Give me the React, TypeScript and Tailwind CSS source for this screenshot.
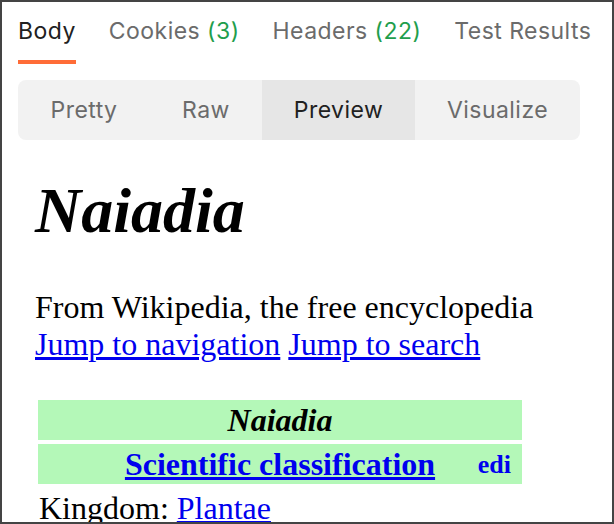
import React from 'react';

const tabs = [
  { label: 'Body', count: null, active: true },
  { label: 'Cookies', count: '(3)', active: false },
  { label: 'Headers', count: '(22)', active: false },
  { label: 'Test Results', count: null, active: false },
];

const modes = [
  { label: 'Pretty', width: 'w-[132px]', active: false },
  { label: 'Raw', width: 'w-[112px]', active: false },
  { label: 'Preview', width: 'w-[153px]', active: true },
  { label: 'Visualize', width: 'w-[165px]', active: false },
];

const App: React.FC = () => {
  return (
    <div className="w-[614px] h-[524px] overflow-hidden bg-white border-2 border-[#444444]">
      {/* Response tabs */}
      <div className="pl-[16px] pt-[13px] flex gap-[33px] font-['Inter',sans-serif] text-[23px] tracking-[0.02em]">
        {tabs.map((tab) => (
          <div key={tab.label} className="flex flex-col">
            <div className={`h-[32px] leading-[32px] whitespace-nowrap ${tab.active ? 'text-[#212121]' : 'text-[#6b6b6b]'}`}>
              {tab.label}
              {tab.count && <span className="text-[#1f9e4d]"> {tab.count}</span>}
            </div>
            <div className={`mt-[13px] h-[4px] ${tab.active ? 'bg-[#ff6c37]' : 'bg-transparent'}`} />
          </div>
        ))}
      </div>

      {/* Body view modes */}
      <div className="ml-[16px] mt-[16px] w-[562px] h-[60px] flex rounded-[8px] overflow-hidden bg-[#f2f2f2] font-['Inter',sans-serif] text-[23px] tracking-[0.02em]">
        {modes.map((mode) => (
          <div
            key={mode.label}
            className={`${mode.width} flex items-center justify-center ${mode.active ? 'bg-[#e6e6e6] text-[#212121]' : 'text-[#6b6b6b]'}`}
          >
            {mode.label}
          </div>
        ))}
      </div>

      {/* HTML preview */}
      <div className="pl-[33px] font-['Liberation_Serif','Times_New_Roman',serif] text-black">
        <h1 className="mt-[34px] text-[64px] leading-[74px] font-bold italic">Naiadia</h1>
        <div className="mt-[41px] text-[32px] leading-[37px]">
          <div>From Wikipedia, the free encyclopedia</div>
          <div>
            <span className="text-[#0000ee] underline">Jump to navigation</span>{' '}
            <span className="text-[#0000ee] underline">Jump to search</span>
          </div>
        </div>

        <div className="ml-[3px] mt-[37px] w-[484px] flex flex-col gap-[4px]">
          <div className="h-[40px] bg-[#b4f8b8] flex items-center justify-center text-[32px] leading-[37px] font-bold italic">
            Naiadia
          </div>
          <div className="h-[40px] bg-[#b4f8b8] grid grid-cols-[1fr_auto_1fr] items-center text-[32px] leading-[37px] font-bold">
            <div />
            <span className="text-[#0000ee] underline">Scientific classification</span>
            <div className="flex justify-end pr-[11px]">
              <span className="text-[26px] text-[#0000ee]">edi</span>
            </div>
          </div>
          <div className="h-[40px] flex items-center pl-[1px] text-[32px] leading-[37px]">
            Kingdom:&nbsp;<span className="text-[#0000ee] underline">Plantae</span>
          </div>
        </div>
      </div>
    </div>
  );
};

export default App;
